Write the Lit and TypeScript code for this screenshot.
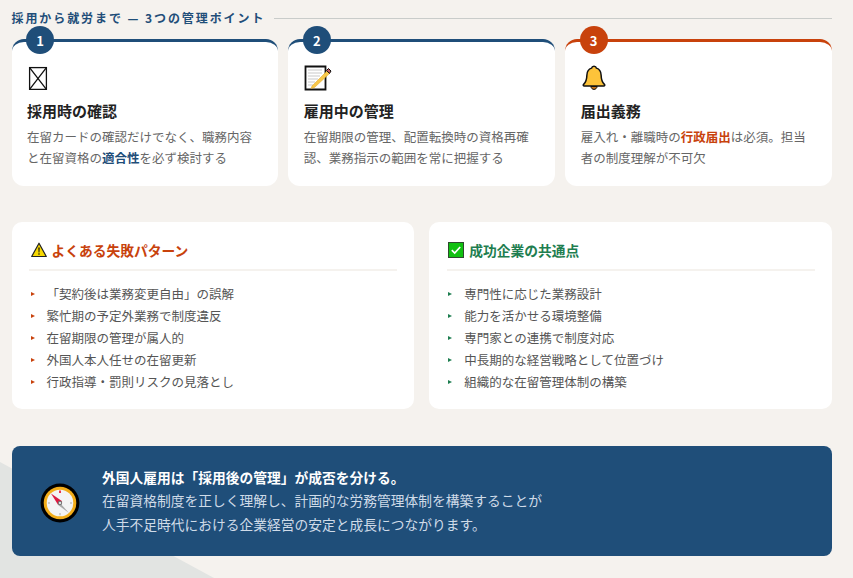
import { LitElement, html, css, svg } from "lit";
import { customElement } from "lit/decorators.js";

const boxIcon = svg`<svg class="ico" width="24" height="24" viewBox="0 0 24 24"><g fill="none" stroke="#111" stroke-width="1.3"><rect x="2.6" y="1.6" width="16.8" height="21.8"/><path d="M2.6 1.6 19.4 23.4M19.4 1.6 2.6 23.4"/></g></svg>`;
const memoIcon = svg`<svg class="ico" width="28" height="26" viewBox="0 0 28 26"><path d="M1.5 1.500h20v23h-20z" fill="#fff" stroke="#111" stroke-width="1.800"/><path d="M4 5h14M4 8h14M4 11h12M4 14h10M4 17h7M4 20h5" stroke="#c9c9c9" stroke-width="1.200"/><path d="M8 21l15-15 2.500 2.500-15 14-3.500 1z" fill="#f9c84a" stroke="#e0a020" stroke-width=".5"/><path d="M22.500 5.500l2-2 2.500 2.500-1.500 2.500z" fill="#c2565c" stroke="#111" stroke-width="1"/></svg>`;
const bellIcon = svg`<svg class="ico bell" width="24" height="26" viewBox="0 0 24 26"><path d="M12 1.200c1.300 0 2.200.8 2.400 1.900 3 .9 4.600 3.500 4.700 6.800.1 4.800 1 7.300 3.300 9.500.8.800.3 1.700-.7 1.700H2.300c-1 0-1.500-.9-.7-1.700 2.300-2.200 3.200-4.700 3.300-9.500.1-3.300 1.700-5.900 4.700-6.800.2-1.100 1.100-1.900 2.400-1.900z" fill="#fdc33a" stroke="#111" stroke-width="1.500"/><path d="M8.800 21.500c.4 1.900 1.700 2.900 3.200 2.900s2.800-1 3.200-2.900z" fill="#c8741a" stroke="#111" stroke-width="1"/></svg>`;
const warnIcon = svg`<svg width="16" height="16" viewBox="0 0 16 16"><path d="M8 1.200 15.300 14.500H.7z" fill="#f6d800" stroke="#222" stroke-width="1.200" stroke-linejoin="round"/><path d="M7.300 5.500h1.400l-.3 5h-.8z" fill="#111"/><circle cx="8" cy="12" r=".8" fill="#111"/></svg>`;
const checkIcon = svg`<svg width="16" height="16" viewBox="0 0 16 16"><rect x=".5" y=".5" width="15" height="15" fill="#10c010" stroke="#2e4a2e"/><path d="M3.800 8.200 6.700 11l5.500-6" fill="none" stroke="#fff" stroke-width="1.700"/></svg>`;
const compass = svg`<svg width="40" height="40" viewBox="0 0 40 40"><circle cx="20" cy="20" r="19.400" fill="#000"/><circle cx="20" cy="20" r="16.300" fill="#f3ad19"/><circle cx="20" cy="20" r="13.300" fill="#f4f4f4"/><rect x="19" y="7.500" width="2" height="2.500" fill="#e8384c"/><path d="M19.500 30h1v2.200h-1zM8 19.500h2v1H8zM30 19.500h2v1h-2z" fill="#aaa"/><path d="M20 20 29 30 17.800 21.800z" fill="#a8a8a8"/><path d="M11 10.500 22.200 18.200 18 21.800z" fill="#dc1a40"/><circle cx="20" cy="20" r="2.200" fill="#777"/><circle cx="20" cy="20" r="1" fill="#fff"/></svg>`;

@customElement("app-root")
export class AppRoot extends LitElement {
  static styles = css`
    :host {
      display: block;
      position: relative;
      width: 853px;
      height: 578px;
      overflow: hidden;
      background: #f5f2ee;
      font-family: "Noto Sans CJK JP", "Noto Sans", sans-serif;
      color: #555;
    }
    .tri {
      position: absolute;
      inset: 0;
      background: #e2e4e2;
      clip-path: polygon(0 462px, 214px 578px, 0 578px);
    }
    .wrap {
      position: relative;
      box-sizing: border-box;
      width: 853px;
      padding: 9px 21px 0 11.500px;
      display: flex;
      flex-direction: column;
    }
    .heading {
      display: flex;
      align-items: center;
      gap: 9px;
      height: 18px;
      font-size: 12px;
      line-height: 18px;
      font-weight: 700;
      letter-spacing: 1.920px;
      color: #1f4e79;
      white-space: nowrap;
    }
    .heading i {
      flex: 1;
      height: 1px;
      background: #c9ccca;
    }
    .points {
      display: grid;
      grid-template-columns: repeat(3, 1fr);
      gap: 10px;
      margin-top: 12px;
    }
    .point {
      position: relative;
      box-sizing: border-box;
      height: 147px;
      padding: 23px 15.500px 0;
      background: #fff;
      border-top: 3px solid #1f4e79;
      border-radius: 12px;
    }
    .point.red { border-top-color: #c8420c; }
    .num {
      position: absolute;
      left: 14.500px;
      top: -16px;
      width: 28px;
      height: 28px;
      border-radius: 50%;
      background: #1f4e79;
      color: #fff;
      font-size: 13px;
      font-weight: 700;
      display: flex;
      align-items: center;
      justify-content: center;
    }
    .red .num { background: #c8420c; }
    .icon {
      height: 26px;
      display: flex;
      align-items: center;
    }
    .ico { display: block; }
    .bell { margin-left: 1px; }
    h3 {
      margin: 9px 0 0;
      font-size: 15px;
      line-height: 22px;
      font-weight: 700;
      color: #222;
    }
    .point p {
      margin: 5px 0 0;
      font-size: 12.500px;
      line-height: 20.500px;
      color: #666;
    }
    b.blue { color: #1f4e79; }
    b.red { color: #c8420c; }
    .lists {
      display: grid;
      grid-template-columns: 1fr 1fr;
      gap: 15px;
      margin-top: 36px;
    }
    .list {
      box-sizing: border-box;
      height: 187px;
      padding: 17px 17.500px 0;
      background: #fff;
      border-radius: 10px;
    }
    .list h4 {
      margin: 0;
      display: flex;
      align-items: center;
      gap: 5px;
      height: 22px;
      padding: 0 0 8px 1.500px;
      border-bottom: 2px solid #f5f2ee;
      font-size: 13.750px;
      line-height: 22px;
      font-weight: 700;
      color: #c8420c;
    }
    .list.ok h4 { color: #1e7e50; }
    ul {
      list-style: none;
      margin: 12px 0 0;
      padding: 0;
    }
    li {
      position: relative;
      padding-left: 17.500px;
      font-size: 12.500px;
      line-height: 22px;
      color: #555;
    }
    li::before {
      content: "";
      position: absolute;
      left: 1.500px;
      top: 9px;
      border-left: 4px solid #c8420c;
      border-top: 2px solid transparent;
      border-bottom: 2px solid transparent;
    }
    .ok li::before { border-left-color: #1e7e50; }
    .banner {
      box-sizing: border-box;
      height: 110px;
      margin-top: 37px;
      padding: 0 28.500px;
      display: flex;
      align-items: center;
      gap: 22px;
      background: #1f4e79;
      border-radius: 8px;
      color: #cfdbe8;
      font-size: 13.750px;
      line-height: 23.500px;
    }
    .banner svg { flex: none; margin-top: 3px; }
    .banner strong {
      display: block;
      color: #fff;
      font-size: 13.750px;
      font-weight: 700;
    }
  `;

  render() {
    return html`
      <div class="tri"></div>
      <div class="wrap">
        <div class="heading"><span>採用から就労まで — 3つの管理ポイント</span><i></i></div>
        <div class="points">
          <div class="point">
            <div class="num">1</div>
            <div class="icon">${boxIcon}</div>
            <h3>採用時の確認</h3>
            <p>在留カードの確認だけでなく、職務内容と在留資格の<b class="blue">適合性</b>を必ず検討する</p>
          </div>
          <div class="point">
            <div class="num">2</div>
            <div class="icon">${memoIcon}</div>
            <h3>雇用中の管理</h3>
            <p>在留期限の管理、配置転換時の資格再確認、業務指示の範囲を常に把握する</p>
          </div>
          <div class="point red">
            <div class="num">3</div>
            <div class="icon">${bellIcon}</div>
            <h3>届出義務</h3>
            <p>雇入れ・離職時の<b class="red">行政届出</b>は必須。担当者の制度理解が不可欠</p>
          </div>
        </div>
        <div class="lists">
          <div class="list">
            <h4>${warnIcon}<span>よくある失敗パターン</span></h4>
            <ul>
              <li>「契約後は業務変更自由」の誤解</li>
              <li>繁忙期の予定外業務で制度違反</li>
              <li>在留期限の管理が属人的</li>
              <li>外国人本人任せの在留更新</li>
              <li>行政指導・罰則リスクの見落とし</li>
            </ul>
          </div>
          <div class="list ok">
            <h4>${checkIcon}<span>成功企業の共通点</span></h4>
            <ul>
              <li>専門性に応じた業務設計</li>
              <li>能力を活かせる環境整備</li>
              <li>専門家との連携で制度対応</li>
              <li>中長期的な経営戦略として位置づけ</li>
              <li>組織的な在留管理体制の構築</li>
            </ul>
          </div>
        </div>
        <div class="banner">
          ${compass}
          <div>
            <strong>外国人雇用は「採用後の管理」が成否を分ける。</strong>
            在留資格制度を正しく理解し、計画的な労務管理体制を構築することが<br />人手不足時代における企業経営の安定と成長につながります。
          </div>
        </div>
      </div>
    `;
  }
}
